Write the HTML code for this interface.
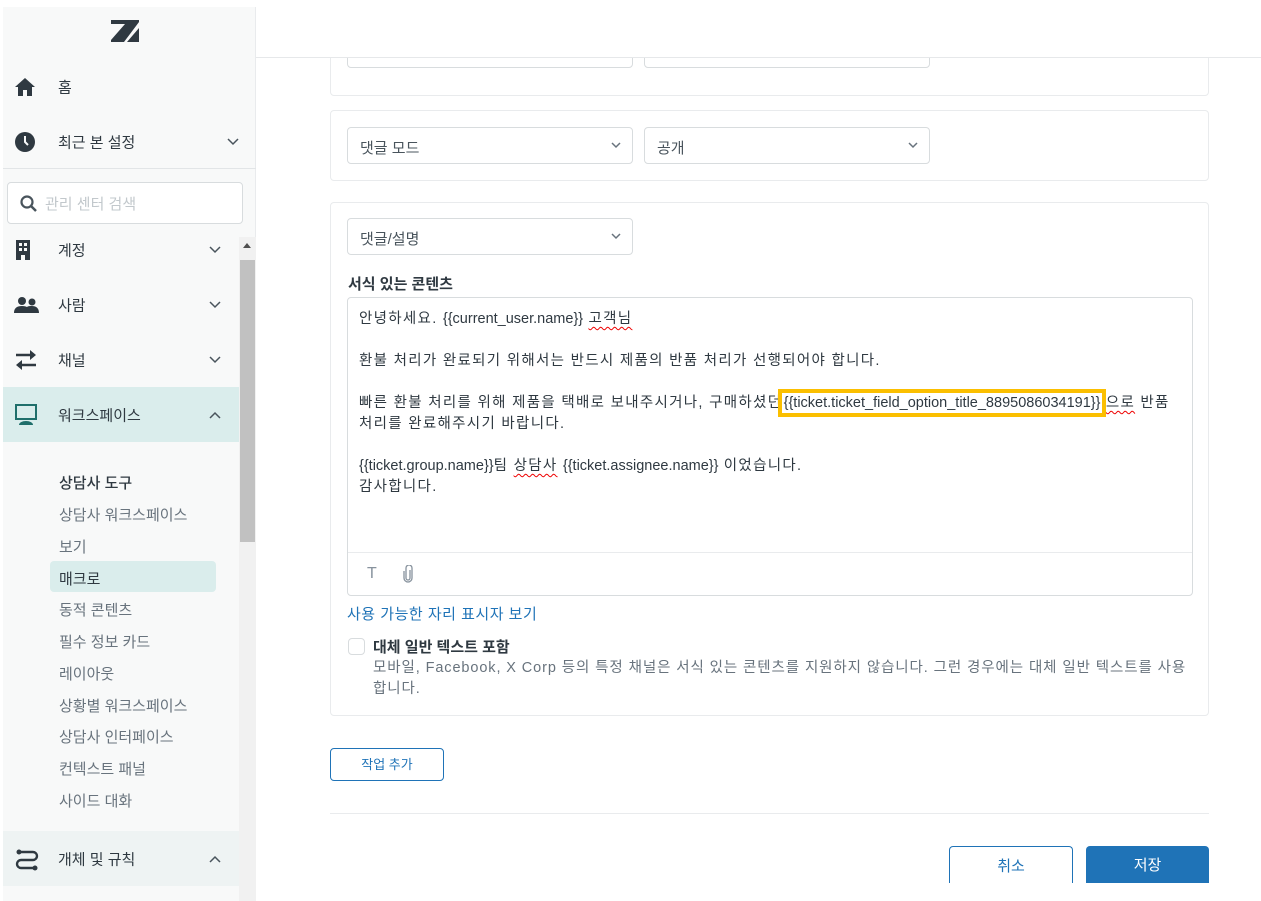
<!DOCTYPE html>
<html><head><meta charset="utf-8">
<style>
*{box-sizing:border-box;margin:0;padding:0}
body{width:1261px;height:901px;overflow:hidden;background:#fff;font-family:"Liberation Sans","Noto Sans CJK KR",sans-serif;color:#2f3941;position:relative}
.abs{position:absolute}
#sb{left:3px;top:7px;width:253px;height:894px;background:#f8f9f9;border-right:1px solid #e9ebed}
.nav{position:absolute;left:0;width:236px;height:55px;font-size:15px;color:#2f3941}
.nav .ic{position:absolute;left:11px;top:50%;transform:translateY(-50%)}
.nav .t{position:absolute;left:55px;top:50%;transform:translateY(-50%)}
.nav .ch{position:absolute;right:18px;top:50%;transform:translateY(-50%)}
.sub{position:absolute;left:56px;font-size:15px;color:#68737d}
.sel{width:220px;height:37px;border:1px solid #d8dcde;border-radius:4px;position:absolute;font-size:15px;color:#49545c;padding:9px 12px;background:#fff}
.sel svg{position:absolute;right:11px;top:14px}
.card{position:absolute;left:330px;width:879px;border:1px solid #e9ebed;border-radius:4px;background:#fff}
.ed{font-size:14.5px;color:#2f3941;line-height:21px;letter-spacing:1.3px}
.ed .l{letter-spacing:0}
.sq{text-decoration:underline wavy #e00;text-decoration-thickness:1px;text-underline-offset:3px}
</style></head><body>
<div class="abs" style="left:256px;top:0;width:1005px;height:58px;background:#fff;border-bottom:1px solid #e6e8ea;z-index:5"></div>

<div class="card" style="top:30px;height:66px">
 <div class="sel" style="left:16px;top:0;width:286px"></div>
 <div class="sel" style="left:313px;top:0;width:286px"></div>
</div>
<div class="card" style="top:110px;height:71px">
 <div class="sel" style="left:16px;top:16px;width:286px">댓글 모드<svg width="10" height="7"><path d="M1 1l4 4 4-4" stroke="#68737d" stroke-width="1.5" fill="none"/></svg></div>
 <div class="sel" style="left:313px;top:16px;width:286px">공개<svg width="10" height="7"><path d="M1 1l4 4 4-4" stroke="#68737d" stroke-width="1.5" fill="none"/></svg></div>
</div>
<div class="card" style="top:202px;height:514px">
 <div class="sel" style="left:16px;top:15px;width:286px">댓글/설명<svg width="10" height="7"><path d="M1 1l4 4 4-4" stroke="#68737d" stroke-width="1.5" fill="none"/></svg></div>
 <div class="abs" style="left:17px;top:70px;font-size:15px;font-weight:bold">서식 있는 콘텐츠</div>
 <div class="abs" style="left:16px;top:94px;width:846px;height:299px;border:1px solid #d8dcde;border-radius:4px">
  <div class="abs ed" style="left:11px;top:11px;width:830px">
   <div>안녕하세요. <span class="l">{{current_user.name}}</span> <span class="sq">고객님</span></div>
   <div style="margin-top:21px">환불 처리가 완료되기 위해서는 반드시 제품의 반품 처리가 선행되어야 합니다.</div>
   <div style="margin-top:21px">빠른 환불 처리를 위해 제품을 택배로 보내주시거나, 구매하셨던 <span class="l" style="outline:4px solid #fbbf00;outline-offset:2px;margin-left:-4px">{{ticket.ticket_field_option_title_8895086034191}}</span> <span class="sq">으로</span> 반품 처리를 완료해주시기 바랍니다.</div>
   <div style="margin-top:21px"><span class="l">{{ticket.group.name}}</span>팀 <span class="sq">상담사</span> <span class="l">{{ticket.assignee.name}}</span> 이었습니다.</div>
   <div>감사합니다.</div>
  </div>
  <div class="abs" style="left:0;top:254px;width:844px;border-top:1px solid #e9ebed"></div>
  <div class="abs" style="left:19px;top:267px;font-size:16px;color:#87929d">T</div>
  <svg class="abs" style="left:54px;top:267px" width="12" height="18" viewBox="0 0 12 18"><path d="M8 5v8a2 2 0 0 1-4 0V3a3 3 0 0 1 6 0v10a4 4 0 0 1-8 0V6" stroke="#87929d" stroke-width="1.3" fill="none"/></svg>
 </div>
 <div class="abs" style="left:16px;top:400px;font-size:15px;color:#1f73b7;letter-spacing:0.5px">사용 가능한 자리 표시자 보기</div>
 <div class="abs" style="left:17px;top:435px;width:17px;height:17px;border:1px solid #d8dcde;border-radius:4px"></div>
 <div class="abs" style="left:42px;top:433px;font-size:15px;font-weight:bold">대체 일반 텍스트 포함</div>
 <div class="abs" style="left:42px;top:455px;width:815px;font-size:14.5px;line-height:21px;color:#68737d;letter-spacing:0.9px;word-break:break-all">모바일, Facebook, X Corp 등의 특정 채널은 서식 있는 콘텐츠를 지원하지 않습니다. 그런 경우에는 대체 일반 텍스트를 사용합니다.</div>
</div>
<div class="abs" style="left:330px;top:748px;width:114px;height:33px;border:1px solid #1f73b7;border-radius:4px;color:#1f73b7;font-size:13px;text-align:center;line-height:31px">작업 추가</div>
<div class="abs" style="left:330px;top:813px;width:879px;border-top:1px solid #e9ebed"></div>
<div class="abs" style="left:949px;top:846px;width:124px;height:37px;border:1px solid #1f73b7;border-bottom:none;border-radius:4px 4px 0 0;color:#1f73b7;font-size:15px;text-align:center;line-height:40px">취소</div>
<div class="abs" style="left:1086px;top:846px;width:123px;height:37px;background:#1f73b7;border-radius:4px 4px 0 0;color:#fff;font-size:15px;text-align:center;line-height:40px">저장</div>

<div id="sb" class="abs">
 <svg class="abs" style="left:108px;top:13px" width="28" height="22" viewBox="0 0 28 22"><path d="M0 0h28v2L13 22H0v-2L14 4H0z" fill="#2f3941"/><path d="M16 22L28 8v14z" fill="#2f3941"/></svg>
 <div class="nav" style="top:52px"><svg class="ic" width="22" height="20" viewBox="0 0 22 20"><path d="M11 1L1 10h3v9h5v-6h4v6h5v-9h3z" fill="#2f3941"/></svg><span class="t">홈</span></div>
 <div class="nav" style="top:107px"><svg class="ic" width="22" height="22" viewBox="0 0 22 22"><circle cx="11" cy="11" r="10" fill="#2f3941"/><path d="M11 5v6l3 3" stroke="#f8f9f9" stroke-width="2" fill="none"/></svg><span class="t">최근 본 설정</span><svg class="ch" style="right:0" width="12" height="8"><path d="M1 1l5 5 5-5" stroke="#49545c" stroke-width="1.5" fill="none"/></svg></div>
 <div class="abs" style="left:0;top:161px;width:253px;border-top:1px solid #e2e5e7"></div>
 <div class="abs" style="left:4px;top:175px;width:236px;height:42px;background:#fff;border:1px solid #d8dcde;border-radius:4px;font-size:15px;color:#c2c8cc;padding:10px 0 0 37px">관리 센터 검색
  <svg class="abs" style="left:12px;top:12px" width="18" height="18" viewBox="0 0 18 18"><circle cx="7" cy="7" r="5.5" stroke="#49545c" stroke-width="2.2" fill="none"/><path d="M11 11l5 5" stroke="#49545c" stroke-width="2.5"/></svg></div>
 <div class="abs" style="left:236px;top:230px;width:17px;height:664px;background:#f1f1f1"></div>
 <div class="abs" style="left:237px;top:253px;width:15px;height:282px;background:#c1c1c1"></div>
 <div class="abs" style="left:240px;top:236px;width:0;height:0;border-left:4px solid transparent;border-right:4px solid transparent;border-bottom:5px solid #505050"></div>
 <div class="nav" style="top:215px"><svg class="ic" width="18" height="20" viewBox="0 0 18 20"><path d="M2 0h14v20h-5v-5H7v5H2zM5 3v3h3V3zM10 3v3h3V3zM5 8v3h3V8zM10 8v3h3V8z" fill="#2f3941" fill-rule="evenodd"/></svg><span class="t">계정</span><svg class="ch" width="12" height="8"><path d="M1 1l5 5 5-5" stroke="#49545c" stroke-width="1.5" fill="none"/></svg></div>
 <div class="nav" style="top:270px"><svg class="ic" width="26" height="18" viewBox="0 0 26 18"><circle cx="8" cy="5" r="4" fill="#2f3941"/><circle cx="18" cy="6" r="3.5" fill="#2f3941"/><path d="M0 17c0-5 3-7 8-7s8 2 8 7zM15 17c0-3-1-5-2-6 1-1 3-1 5-1 4 0 7 2 7 7z" fill="#2f3941"/></svg><span class="t">사람</span><svg class="ch" width="12" height="8"><path d="M1 1l5 5 5-5" stroke="#49545c" stroke-width="1.5" fill="none"/></svg></div>
 <div class="nav" style="top:325px"><svg class="ic" width="24" height="22" viewBox="0 0 24 22"><path d="M2 6h16M22 16H6" stroke="#2f3941" stroke-width="2.6"/><path d="M16 1l6 5-6 5zM8 11l-6 5 6 5z" fill="#2f3941"/></svg><span class="t">채널</span><svg class="ch" width="12" height="8"><path d="M1 1l5 5 5-5" stroke="#49545c" stroke-width="1.5" fill="none"/></svg></div>
 <div class="nav" style="top:380px;background:#daedec"><svg class="ic" width="24" height="22" viewBox="0 0 24 22"><rect x="2" y="1" width="20" height="14" stroke="#1f6f6b" stroke-width="2" fill="none"/><path d="M5 21a7 4 0 0 1 14 0z" fill="#1f6f6b"/></svg><span class="t">워크스페이스</span><svg class="ch" width="12" height="8"><path d="M1 7l5-5 5 5" stroke="#49545c" stroke-width="1.5" fill="none"/></svg></div>
 <div class="sub" style="top:465px;color:#2f3941;font-weight:500">상담사 도구</div>
 <div class="sub" style="top:497px">상담사 워크스페이스</div>
 <div class="sub" style="top:529px">보기</div>
 <div class="abs" style="left:47px;top:554px;width:166px;height:31px;background:#daedec;border-radius:4px"></div>
 <div class="sub" style="top:561px;color:#2f3941">매크로</div>
 <div class="sub" style="top:592px">동적 콘텐츠</div>
 <div class="sub" style="top:624px">필수 정보 카드</div>
 <div class="sub" style="top:656px">레이아웃</div>
 <div class="sub" style="top:688px">상황별 워크스페이스</div>
 <div class="sub" style="top:719px">상담사 인터페이스</div>
 <div class="sub" style="top:751px">컨텍스트 패널</div>
 <div class="sub" style="top:783px">사이드 대화</div>
 <div class="nav" style="top:824px;background:#eef3f3"><svg class="ic" width="26" height="24" viewBox="0 0 26 24"><path d="M6 5h13a4 4 0 0 1 0 8H7a4 4 0 0 0 0 8h13" stroke="#2f3941" stroke-width="2.4" fill="none"/><circle cx="5" cy="5" r="2.5" fill="#2f3941"/><circle cx="21" cy="21" r="2.5" fill="#2f3941"/></svg><span class="t">개체 및 규칙</span><svg class="ch" width="12" height="8"><path d="M1 7l5-5 5 5" stroke="#49545c" stroke-width="1.5" fill="none"/></svg></div>
</div>
</body></html>
